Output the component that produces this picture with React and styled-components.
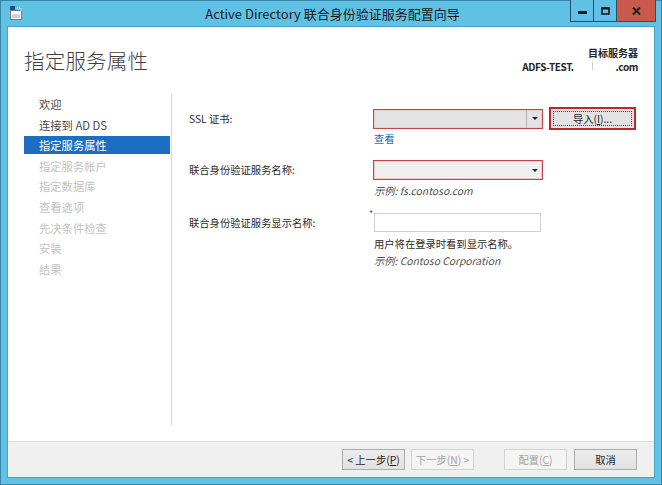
import React from "react";
import styled, { createGlobalStyle } from "styled-components";

const Global = createGlobalStyle`
  html, body { margin: 0; padding: 0; overflow: hidden; background: #ffffff; }
  * { box-sizing: border-box; }
  body { font-family: "Noto Sans CJK SC", "Noto Sans", sans-serif; }
`;

const Window = styled.div`
  width: 662px;
  height: 485px;
  background: #5fc2e4;
  border: 1px solid #3a86ab;
  display: flex;
  flex-direction: column;
`;

const TitleBar = styled.div`
  height: 25px;
  display: grid;
  grid-template-columns: 1fr auto 1fr;
  align-items: start;
  padding: 0 5px 0 8px;
`;

const AppIcon = styled.div`
  padding-top: 4px;
  display: flex;
`;

const TitleText = styled.div`
  font-size: 13px;
  line-height: 25px;
  color: #1b1b1b;
  white-space: nowrap;
`;

const Controls = styled.div`
  justify-self: end;
  display: flex;
  border: 1px solid #24506a;
  border-top: none;
  margin-top: -1px;
`;

const CtrlButton = styled.div`
  width: ${(p) => p.$w}px;
  height: 21px;
  background: ${(p) => (p.$close ? "#c9584d" : "#5fc2e4")};
  border-left: ${(p) => (p.$first ? "none" : "1px solid #24506a")};
  display: flex;
  align-items: center;
  justify-content: center;
`;

const Client = styled.div`
  flex: 1;
  margin: 0 6px 6px 6px;
  border: 1px solid #4aa2c6;
  background: #ffffff;
  display: flex;
  flex-direction: column;
  min-height: 0;
`;

const Header = styled.div`
  height: 67px;
  display: flex;
  justify-content: space-between;
  align-items: flex-start;
  padding: 0 16px 0 16px;
`;

const PageTitle = styled.div`
  margin-top: 19px;
  font-size: 20.5px;
  line-height: 28px;
  font-weight: 300;
  color: #3f3f3f;
  letter-spacing: 0.2px;
`;

const ServerInfo = styled.div`
  margin-top: 19px;
  text-align: right;
  font-weight: 700;
  color: #262626;
  white-space: nowrap;
  flex-shrink: 0;
`;

const ServerLine = styled.div`
  font-size: 10px;
  line-height: 13.5px;
  letter-spacing: ${(p) => (p.$tight ? "-0.4px" : "0")};
`;

const Redacted = styled.span`
  display: inline-block;
  width: 42px;
  height: 9px;
  position: relative;
  &::before {
    content: "";
    position: absolute;
    left: 18px;
    top: 0;
    width: 1px;
    height: 8px;
    background: #c8c8c8;
  }
`;

const Body = styled.div`
  flex: 1;
  display: flex;
  min-height: 0;
`;

const Sidebar = styled.div`
  width: 163px;
  padding: 1px 1px 0 16px;
  display: flex;
  flex-direction: column;
`;

const NavItem = styled.div`
  height: 18px;
  margin-bottom: 2.6px;
  padding-left: 15px;
  font-size: 11.3px;
  line-height: 18px;
  white-space: nowrap;
  color: ${(p) => (p.$active ? "#ffffff" : p.$disabled ? "#c2c2c2" : "#4a4a4a")};
  background: ${(p) => (p.$active ? "#1b6ec1" : "transparent")};
`;

const Content = styled.div`
  flex: 1;
  border-left: 1px solid #d6d6d6;
  margin-bottom: 16px;
  padding: 13px 0 0 17px;
  display: grid;
  grid-template-columns: 184px 1fr;
  align-content: start;
`;

const Label = styled.div`
  font-size: 10.3px;
  line-height: ${(p) => p.$lh}px;
  margin-top: ${(p) => p.$mt || 0}px;
  color: #2a2a2a;
  white-space: nowrap;
`;

const Field = styled.div`
  margin-top: ${(p) => p.$mt || 0}px;
  display: flex;
  flex-direction: column;
  align-items: flex-start;
`;

const FieldLine = styled.div`
  display: flex;
  align-items: center;
  gap: 6px;
`;

const Combo = styled.div`
  width: 170px;
  height: 20px;
  border: 1px solid #c4434c;
  box-shadow: inset 0 0 0 1px #f3c9cb;
  background: ${(p) => p.$fill};
  display: flex;
  justify-content: flex-end;
`;

const ComboArrow = styled.div`
  width: 16px;
  height: 100%;
  border-left: 1px solid ${(p) => (p.$sep ? "#b3b3b3" : "transparent")};
  display: flex;
  align-items: center;
  justify-content: center;
  &::after {
    content: "";
    border-left: 3px solid transparent;
    border-right: 3px solid transparent;
    border-top: 3px solid #222;
  }
`;

const ImportButton = styled.div`
  width: 87px;
  height: 23px;
  border: 2px solid #c3252e;
  background: #e3e3e3;
  padding: 2px;
  display: flex;
`;

const FocusRect = styled.div`
  flex: 1;
  border: 1px dotted #4a4a4a;
  display: flex;
  align-items: center;
  justify-content: center;
  font-size: 10.3px;
  color: #1e1e1e;
`;

const LinkText = styled.div`
  margin-top: 1px;
  padding-left: 1px;
  font-size: 10.3px;
  line-height: 16px;
  color: #1f6db5;
`;

const Hint = styled.div`
  margin-top: ${(p) => p.$mt || 0}px;
  padding-left: 1px;
  font-size: 10.3px;
  line-height: ${(p) => p.$lh}px;
  color: ${(p) => (p.$italic ? "#505050" : "#2a2a2a")};
  font-style: ${(p) => (p.$italic ? "italic" : "normal")};
  white-space: nowrap;
`;

const InputWrap = styled.div`
  position: relative;
  padding-left: 1px;
`;

const Required = styled.span`
  position: absolute;
  left: -4px;
  top: -4px;
  font-size: 9px;
  line-height: 10px;
  color: #d02a2a;
`;

const TextInput = styled.div`
  width: 167px;
  height: 19px;
  border: 1px solid #d0d0d0;
  background: #ffffff;
`;

const Footer = styled.div`
  height: 36px;
  border-top: 1px solid #dedede;
  background: #f0f0f0;
  display: flex;
  justify-content: flex-end;
  align-items: flex-start;
  padding: 7px 17px 0 0;
`;

const Button = styled.div`
  width: 63px;
  height: 21px;
  margin-left: ${(p) => p.$ml || 0}px;
  border: 1px solid ${(p) => (p.$disabled ? "#d3d3d3" : "#acacac")};
  background: ${(p) => (p.$disabled ? "#f4f4f4" : "linear-gradient(#ececec, #e1e1e1)")};
  color: ${(p) => (p.$disabled ? "#a3a3a3" : "#1e1e1e")};
  font-size: 10.3px;
  display: flex;
  align-items: center;
  justify-content: center;
  white-space: nowrap;
`;

const nav = [
  { t: "欢迎" },
  { t: "连接到 AD DS" },
  { t: "指定服务属性", active: true },
  { t: "指定服务帐户", disabled: true },
  { t: "指定数据库", disabled: true },
  { t: "查看选项", disabled: true },
  { t: "先决条件检查", disabled: true },
  { t: "安装", disabled: true },
  { t: "结果", disabled: true },
];

export default function App() {
  return (
    <>
      <Global />
      <Window>
        <TitleBar>
          <AppIcon>
            <svg width="14" height="16" viewBox="0 0 14 16">
              <rect x="1" y="1" width="5" height="4" fill="#1d4e7a" />
              <rect x="1.5" y="5.5" width="11" height="9" fill="#ffffff" stroke="#6d7f8c" />
              <rect x="3" y="9" width="8" height="4" fill="#c9d3da" />
              <path d="M8 3h1M10 3h1M12 3v1M12 5v1" stroke="#ffffff" strokeWidth="1" />
            </svg>
          </AppIcon>
          <TitleText>Active Directory 联合身份验证服务配置向导</TitleText>
          <Controls>
            <CtrlButton $w={22} $first>
              <svg width="9" height="9" viewBox="0 0 9 9">
                <rect x="0" y="5" width="9" height="3" fill="#1a1a1a" />
              </svg>
            </CtrlButton>
            <CtrlButton $w={23}>
              <svg width="9" height="8" viewBox="0 0 9 8">
                <rect x="1" y="1" width="7" height="6" fill="none" stroke="#1a1a1a" strokeWidth="1.6" />
                <rect x="0.5" y="0.5" width="8" height="2" fill="#1a1a1a" />
              </svg>
            </CtrlButton>
            <CtrlButton $w={39} $close>
              <svg width="9" height="8" viewBox="0 0 9 8">
                <path d="M1 0.5L8 7.5M8 0.5L1 7.5" stroke="#1f1f1f" strokeWidth="2" />
              </svg>
            </CtrlButton>
          </Controls>
        </TitleBar>
        <Client>
          <Header>
            <PageTitle>指定服务属性</PageTitle>
            <ServerInfo>
              <ServerLine>目标服务器</ServerLine>
              <ServerLine $tight>
                ADFS-TEST.<Redacted />.com
              </ServerLine>
            </ServerInfo>
          </Header>
          <Body>
            <Sidebar>
              {nav.map((n) => (
                <NavItem key={n.t} $active={n.active} $disabled={n.disabled}>
                  {n.t}
                </NavItem>
              ))}
            </Sidebar>
            <Content>
              <Label $lh={23}>SSL 证书:</Label>
              <Field>
                <FieldLine>
                  <Combo $fill="#e3e3e3">
                    <ComboArrow $sep />
                  </Combo>
                  <ImportButton>
                    <FocusRect>
                      导入(<u>I</u>)...
                    </FocusRect>
                  </ImportButton>
                </FieldLine>
                <LinkText>查看</LinkText>
              </Field>

              <Label $lh={20} $mt={13}>联合身份验证服务名称:</Label>
              <Field $mt={13}>
                <Combo $fill="#f0f0f0">
                  <ComboArrow />
                </Combo>
                <Hint $mt={3} $lh={16} $italic>
                  示例: fs.contoso.com
                </Hint>
              </Field>

              <Label $lh={19} $mt={14}>联合身份验证服务显示名称:</Label>
              <Field $mt={14}>
                <InputWrap>
                  <Required>*</Required>
                  <TextInput />
                </InputWrap>
                <Hint $mt={3} $lh={17}>用户将在登录时看到显示名称。</Hint>
                <Hint $lh={17} $italic>
                  示例: Contoso Corporation
                </Hint>
              </Field>
            </Content>
          </Body>
          <Footer>
            <Button>
              &lt; 上一步(<u>P</u>)
            </Button>
            <Button $ml={6} $disabled>
              下一步(<u>N</u>) &gt;
            </Button>
            <Button $ml={30} $disabled>
              配置(<u>C</u>)
            </Button>
            <Button $ml={7}>取消</Button>
          </Footer>
        </Client>
      </Window>
    </>
  );
}
